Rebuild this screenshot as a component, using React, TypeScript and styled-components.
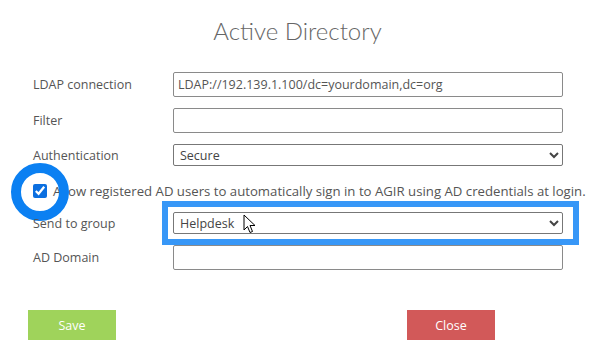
import React from 'react'
import styled, { createGlobalStyle } from 'styled-components'

const GlobalStyle = createGlobalStyle`
  html, body {
    margin: 0;
    padding: 0;
    background: #fff;
  }
  body {
    font-family: 'Open Sans', 'Noto Sans', sans-serif;
    color: #555;
  }
`

const Dialog = styled.div`
  position: relative;
  width: 595px;
  height: 355px;
  box-sizing: border-box;
  padding-top: 14px;
  background: #fff;
  overflow: hidden;
`

const Title = styled.h1`
  margin: 0;
  text-align: center;
  font-family: Lato, 'Open Sans', sans-serif;
  font-size: 24px;
  font-weight: 300;
  line-height: 34px;
  color: #666;
`

const Form = styled.div`
  display: flex;
  flex-direction: column;
  padding: 18px 0 0 33px;
`

const Row = styled.div<{ h: number }>`
  position: relative;
  display: grid;
  grid-template-columns: 140px 390px;
  align-items: center;
  height: ${(p) => p.h}px;
`

const Label = styled.label`
  font-size: 12.5px;
  color: #555;
`

const Input = styled.input`
  box-sizing: border-box;
  width: 390px;
  height: 25px;
  border: 1px solid #8a8a8a;
  border-radius: 2px;
  padding: 0 4px;
  font-family: 'Open Sans', sans-serif;
  font-size: 12.5px;
  color: #555;
  outline: none;
`

const Select = styled.select`
  box-sizing: border-box;
  width: 390px;
  height: 22px;
  border: 1px solid #777;
  border-radius: 2px;
  padding: 0 2px;
  font-family: 'Open Sans', sans-serif;
  font-size: 12.5px;
  color: #444;
  background: #fff;
`

const CheckRow = styled.div`
  position: relative;
  display: flex;
  align-items: center;
  gap: 6px;
  height: 38px;
  font-size: 13.2px;
  color: #555;
  white-space: nowrap;
`

const Check = styled.input`
  width: 14px;
  height: 14px;
  margin: 0;
  accent-color: #0b6fe0;
`

const Ring = styled.div`
  position: absolute;
  left: -22px;
  top: -9px;
  width: 58px;
  height: 58px;
  box-sizing: border-box;
  border: 10px solid #0b80f2;
  border-radius: 50%;
  pointer-events: none;
`

const Highlight = styled.div`
  position: absolute;
  left: 129px;
  top: -9px;
  width: 417px;
  height: 44px;
  box-sizing: border-box;
  border: 6px solid #3797f7;
  pointer-events: none;
`

const Cursor = styled.svg`
  position: absolute;
  left: 210px;
  top: 4px;
  pointer-events: none;
`

const Footer = styled.div`
  display: flex;
  justify-content: space-between;
  padding: 32px 100px 0 28px;
`

const Button = styled.button<{ tone: 'save' | 'close' }>`
  width: 88px;
  height: 30px;
  border: none;
  border-radius: 0;
  background: ${(p) => (p.tone === 'save' ? '#9fd35b' : '#d25959')};
  color: #fff;
  font-family: 'Open Sans', sans-serif;
  font-size: 12.5px;
`

export default function App() {
  return (
    <>
      <GlobalStyle />
      <Dialog>
        <Title>Active Directory</Title>
        <Form>
          <Row h={36}>
            <Label>LDAP connection</Label>
            <Input defaultValue='LDAP://192.139.1.100/dc=yourdomain,dc=org' />
          </Row>
          <Row h={36}>
            <Label>Filter</Label>
            <Input />
          </Row>
          <Row h={34}>
            <Label>Authentication</Label>
            <Select defaultValue='Secure'>
              <option>Secure</option>
              <option>None</option>
            </Select>
          </Row>
          <CheckRow>
            <Ring />
            <Check type='checkbox' defaultChecked />
            Allow registered AD users to automatically sign in to AGIR using AD credentials at login.
          </CheckRow>
          <Row h={26}>
            <Label>Send to group</Label>
            <Select defaultValue='Helpdesk'>
              <option>Helpdesk</option>
              <option>Support</option>
            </Select>
            <Highlight />
            <Cursor width='14' height='20' viewBox='0 0 14 20'>
              <path
                d='M1 1 L1 16 L4.5 12.5 L7 18.5 L9.5 17.5 L7 11.5 L12 11.5 Z'
                fill='#fff'
                stroke='#000'
                strokeWidth='1'
                strokeLinejoin='round'
              />
            </Cursor>
          </Row>
          <Row h={42}>
            <Label>AD Domain</Label>
            <Input />
          </Row>
        </Form>
        <Footer>
          <Button tone='save'>Save</Button>
          <Button tone='close'>Close</Button>
        </Footer>
      </Dialog>
    </>
  )
}
